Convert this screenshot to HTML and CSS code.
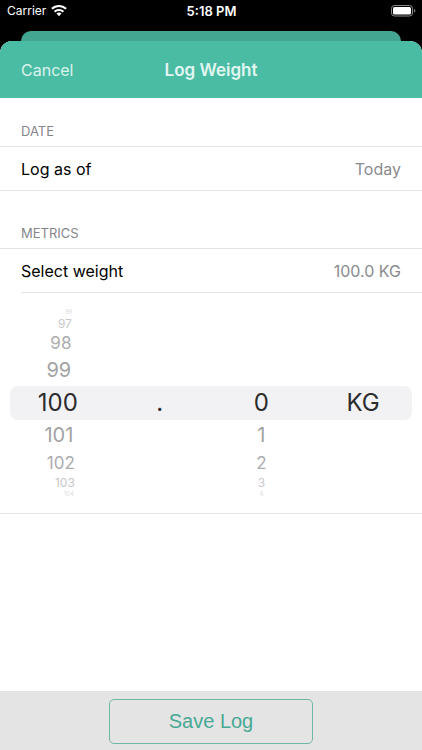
FILE: index.html
```html
<!DOCTYPE html>
<html lang="en">
<head>
  <meta charset="UTF-8">
  <meta name="viewport" content="width=device-width, initial-scale=1.0">
  <title>Log Weight</title>
  <link rel="stylesheet" href="styles.css">
</head>
<body>
  <div class="status-bar">
    <div class="carrier">
      <span>Carrier</span>
      <svg width="16" height="12" viewBox="0 0 16 12" fill="#fff" aria-hidden="true">
        <path d="M8 0C5 0 2.300 1.100.200 3.100L1.600 4.600A9.200 9.200 0 0 1 14.400 4.600L15.800 3.100A11.300 11.300 0 0 0 8 0Z"/>
        <path d="M8 3.900C6 3.900 4.200 4.700 2.900 5.900L4.300 7.400A5.400 5.400 0 0 1 11.700 7.400L13.100 5.900A7.400 7.400 0 0 0 8 3.900Z"/>
        <path d="M8 7.600C7 7.600 6.100 8 5.500 8.600L8 11.200L10.500 8.600C9.900 8 9 7.600 8 7.600Z"/>
      </svg>
    </div>
    <span class="time">5:18 PM</span>
    <svg class="battery" width="25" height="12" viewBox="0 0 25 12" aria-hidden="true">
      <rect x="0.5" y="0.500" width="21" height="10.500" rx="3" fill="none" stroke="#8a8a8a"/>
      <rect x="2" y="2" width="18" height="7.500" rx="1.500" fill="#fff"/>
      <path d="M23 4v3.600c1-.3 1.400-1 1.400-1.800S24 4.300 23 4z" fill="#777"/>
    </svg>
  </div>

  <div class="back-sheet"></div>

  <main class="sheet">
    <header class="nav-bar">
      <button class="cancel" type="button">Cancel</button>
      <h1>Log Weight</h1>
    </header>

    <section>
      <h2>Date</h2>
      <div class="row last">
        <span>Log as of</span>
        <span class="value">Today</span>
      </div>
    </section>

    <section>
      <h2>Metrics</h2>
      <div class="row">
        <span>Select weight</span>
        <span class="value">100.0 KG</span>
      </div>

      <div class="picker">
        <ul class="wheel whole" role="listbox" aria-label="Whole number">
          <li class="edge" role="option">96</li>
          <li class="far" role="option">97</li>
          <li class="mid" role="option">98</li>
          <li class="near" role="option">99</li>
          <li class="selected" role="option" aria-selected="true">100</li>
          <li class="near" role="option">101</li>
          <li class="mid" role="option">102</li>
          <li class="far" role="option">103</li>
          <li class="edge" role="option">104</li>
        </ul>
        <ul class="wheel">
          <li class="selected">.</li>
        </ul>
        <ul class="wheel from-start" role="listbox" aria-label="Decimal">
          <li class="selected" role="option" aria-selected="true">0</li>
          <li class="near" role="option">1</li>
          <li class="mid" role="option">2</li>
          <li class="far" role="option">3</li>
          <li class="edge" role="option">4</li>
        </ul>
        <ul class="wheel" role="listbox" aria-label="Unit">
          <li class="selected" role="option" aria-selected="true">KG</li>
        </ul>
      </div>
    </section>
  </main>

  <footer class="toolbar">
    <button class="save" type="button">Save Log</button>
  </footer>
</body>
</html>
```
FILE: styles.css
```css
* {
  box-sizing: border-box;
}

body {
  margin: 0;
  min-height: 100vh;
  display: flex;
  flex-direction: column;
  background-color: #000;
  color: #000;
  font-family: Inter, "Liberation Sans", sans-serif;
  font-size: 16px;
}

/* Status bar */
.status-bar {
  display: grid;
  grid-template-columns: 1fr auto 1fr;
  align-items: center;
  height: 21px;
  margin-bottom: 10px;
  padding: 0 6px 0 7px;
  color: #fff;
  font-size: 12px;
}

.carrier {
  display: flex;
  align-items: center;
  gap: 5px;
}

.time {
  font-size: 13px;
  font-weight: 600;
}

.battery {
  justify-self: end;
}

/* Sheets */
.back-sheet {
  height: 10px;
  margin: 0 21px;
  border-radius: 10px 10px 0 0;
  background-color: #43a690;
}

.sheet {
  flex: 1;
  border-radius: 12px 12px 0 0;
  background-color: #fff;
  overflow: hidden;
}

.nav-bar {
  display: grid;
  grid-template-columns: 1fr auto 1fr;
  align-items: center;
  height: 57px;
  padding: 0 21px;
  background-color: #4bbca4;
}

.cancel {
  justify-self: start;
  padding: 0;
  border: 0;
  background: none;
  color: #d9f3ec;
  font: inherit;
}

h1 {
  margin: 0;
  color: #e2f6f1;
  font-size: 17px;
  font-weight: 600;
}

h2 {
  margin: 0;
  padding: 25px 21px 6px;
  border-bottom: 1px solid #e4e4e6;
  color: #86868a;
  font-size: 13px;
  font-weight: 400;
  line-height: 17px;
  text-transform: uppercase;
}

.row {
  display: flex;
  justify-content: space-between;
  align-items: center;
  height: 44px;
  margin-left: 21px;
  padding-right: 21px;
  border-bottom: 1px solid #e4e4e6;
}

.row.last {
  margin-left: 0;
  padding-left: 21px;
  margin-bottom: 9px;
}

.value {
  color: #8a8a8e;
}

/* Weight picker */
.picker {
  position: relative;
  z-index: 0;
  display: grid;
  grid-template-columns: repeat(4, 1fr);
  align-items: center;
  height: 221px;
  padding: 0 8px 0 7px;
  border-bottom: 1px solid #e4e4e6;
}

/* Band behind the selected values */
.picker::before {
  content: "";
  position: absolute;
  z-index: -1;
  top: 93px;
  left: 10px;
  right: 10px;
  height: 34px;
  border-radius: 8px;
  background-color: #f2f2f5;
}

.wheel {
  margin: 0;
  padding: 0;
  list-style: none;
  text-align: center;
}

.from-start {
  padding-top: 78px;
}

.wheel .selected {
  color: #2c2c2e;
  font-size: 24px;
  line-height: 34px;
}

.wheel .near {
  color: #a2a2a4;
  font-size: 20px;
  line-height: 31px;
}

.wheel .mid {
  color: #acacae;
  font-size: 17px;
  line-height: 24px;
}

.wheel .far {
  color: #c8c8ca;
  font-size: 12px;
  line-height: 15px;
}

.wheel .edge {
  color: #dcdcde;
  font-size: 6px;
  line-height: 8px;
}

/* Outer rows lean towards the middle of the picker */
.whole .near {
  padding-left: 2px;
}

.whole .mid {
  padding-left: 6px;
}

.whole .far {
  padding-left: 14px;
}

.whole .edge {
  padding-left: 22px;
}

/* Bottom toolbar */
.toolbar {
  display: flex;
  justify-content: center;
  padding: 8px 0 6px;
  background-color: #e4e4e4;
}

.save {
  width: 204px;
  height: 45px;
  border: 1px solid #6fb8a7;
  border-radius: 5px;
  background: none;
  color: #47a994;
  font-family: "Liberation Sans", Arial, sans-serif;
  font-size: 20px;
}
```
